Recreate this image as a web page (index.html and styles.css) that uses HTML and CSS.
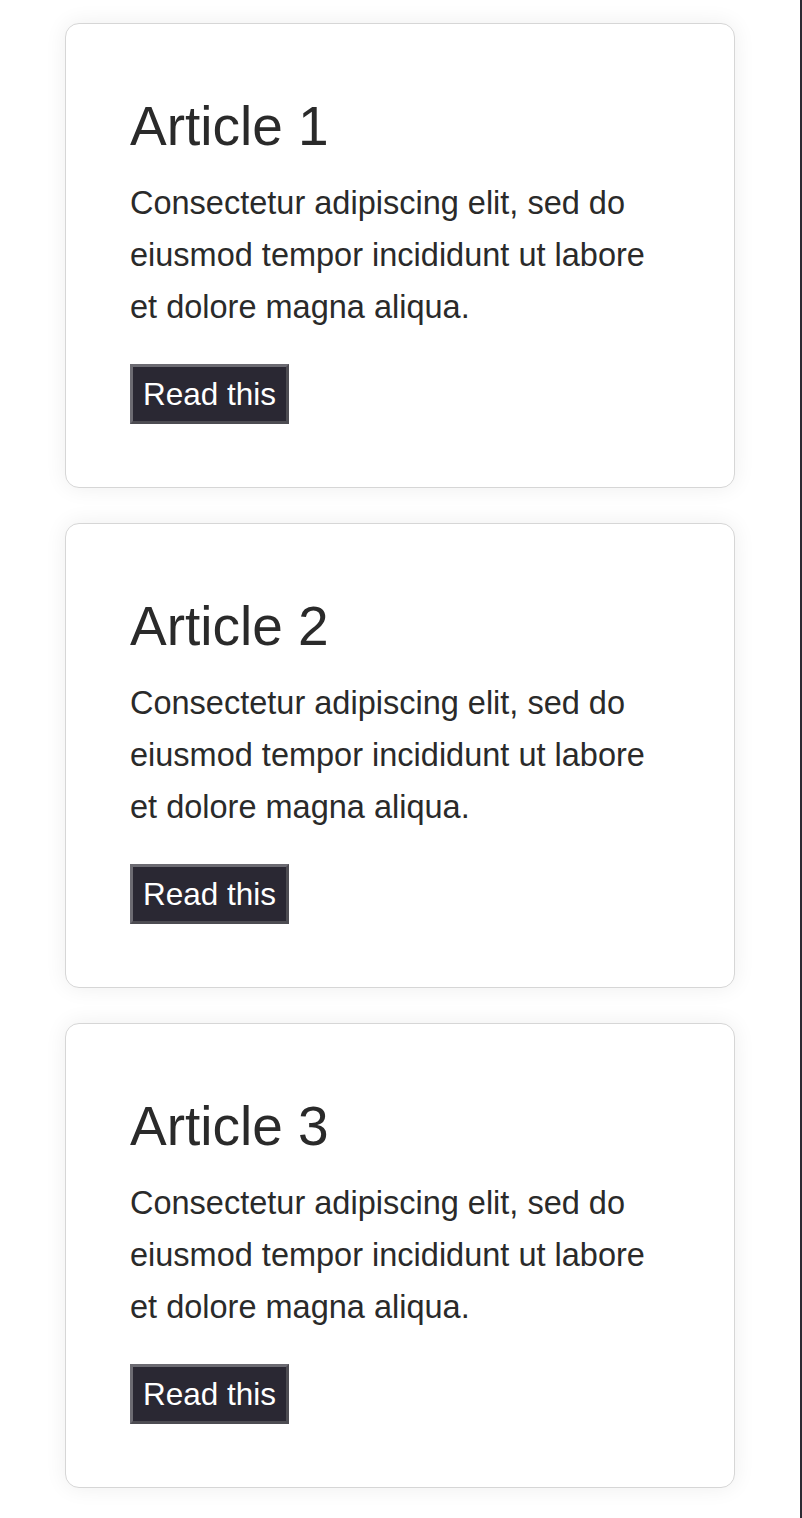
FILE: index.html
```html
<!DOCTYPE html>
<html lang="en">
<head>
<meta charset="utf-8">
<title>Articles</title>
<link rel="stylesheet" href="styles.css">
</head>
<body>
<div class="page">
  <main class="list">
    <article class="card">
      <h2 class="card-title">Article 1</h2>
      <p class="card-text">Consectetur adipiscing elit, sed do eiusmod tempor incididunt ut labore et dolore magna aliqua.</p>
      <button class="btn" type="button">Read this</button>
    </article>
    <article class="card">
      <h2 class="card-title">Article 2</h2>
      <p class="card-text">Consectetur adipiscing elit, sed do eiusmod tempor incididunt ut labore et dolore magna aliqua.</p>
      <button class="btn" type="button">Read this</button>
    </article>
    <article class="card">
      <h2 class="card-title">Article 3</h2>
      <p class="card-text">Consectetur adipiscing elit, sed do eiusmod tempor incididunt ut labore et dolore magna aliqua.</p>
      <button class="btn" type="button">Read this</button>
    </article>
  </main>
</div>
</body>
</html>
```

FILE: styles.css
```css
* { box-sizing: border-box; }
html, body {
  margin: 0;
  padding: 0;
  background: #ffffff;
  overflow: hidden;
}
body {
  font-family: "Liberation Sans", Arial, sans-serif;
  color: #2a2a2a;
}
.page {
  width: 802px;
  height: 1518px;
  border-right: 2px solid #2b2a33;
  padding: 23px 0 0 65px;
}
.list {
  width: 670px;
  display: flex;
  flex-direction: column;
  gap: 35px;
}
.card {
  height: 465px;
  background: #ffffff;
  border: 1px solid #d6d6d6;
  border-radius: 14px;
  box-shadow: 0 0 22px rgba(0, 0, 0, 0.07);
  padding: 70px 64px 64px 64px;
}
.card-title {
  margin: 0;
  font-size: 55px;
  font-weight: 400;
  line-height: 64px;
  color: #2a2a2a;
}
.card-text {
  margin: 19px 0 0 0;
  font-size: 32.5px;
  line-height: 52px;
  color: #2a2a2a;
}
.btn {
  display: block;
  margin-top: 31px;
  font-family: "Liberation Sans", Arial, sans-serif;
  font-size: 31.5px;
  line-height: 36px;
  padding: 9px 10px 9px 10px;
  color: #ffffff;
  background: #2a2833;
  border-style: solid;
  border-width: 3px;
  border-color: #6c6b72 #4d4c52 #4d4c52 #6c6b72;
  border-radius: 0;
}
```
